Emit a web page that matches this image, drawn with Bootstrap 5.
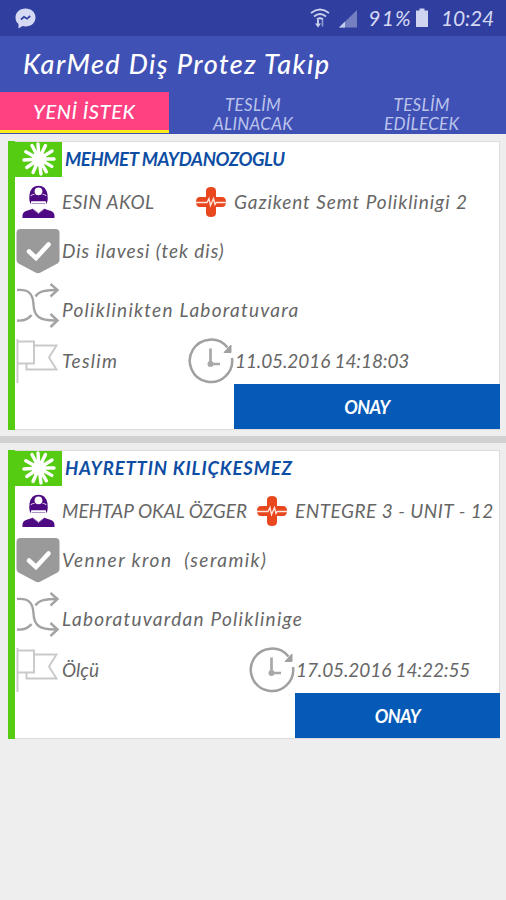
<!DOCTYPE html>
<html lang="tr">
<head>
<meta charset="utf-8">
<meta name="viewport" content="width=device-width, initial-scale=1">
<title>KarMed Diş Protez Takip</title>
<link rel="stylesheet" href="https://cdn.jsdelivr.net/npm/bootstrap@5.3.0/dist/css/bootstrap.min.css">
<style>
body{background:#eee;font-family:"Choco Cooky",Lato,sans-serif;font-style:italic;font-size:19px;line-height:22px;color:#666;overflow:hidden}
svg{display:block;flex:none}
.statusbar{height:36px;background:#303f9f;color:#d5d9f3;font-size:21px;padding-left:15px;padding-right:12px}
.pct{margin-left:10px;letter-spacing:1.3px}
.battery{margin-left:3px}
.time{margin-left:12px;letter-spacing:-.2px}
.appbar{height:56px;background:#3f51b5;color:#fff;font-size:27px;font-weight:500;letter-spacing:1.45px;padding-left:23px}
.tabs{height:42px;background:#3f51b5}
.tabs .nav-link{color:#bcc4ec;font-size:17px;line-height:19px;padding:1px 0 0;border-radius:0;letter-spacing:.3px;display:flex;align-items:center;justify-content:center;text-align:center}
.tabs .nav-link.active{background:#ff4081;color:#fff;font-size:20px;font-weight:500;letter-spacing:.6px;border-bottom:3px solid #ffeb1a;height:41px}
.requests{padding-top:7px}
.request{margin:0 6px 0 8px;background:#fff;border:1px solid #dcdcdc;border-left:0;height:289px}
.request::before{content:"";width:7px;background:#55cb12;margin:-1px 0;flex:none}
.flag-new{width:47px;height:35px;margin-top:-1px;background:#55cb12;padding-left:7px}
.patient{color:#0d4da3;font-weight:700;font-size:18.5px;padding:0 0 2px 3px}
.line-head{height:35px}
.line-staff{height:49px}
.line-work{height:49px}
.line-route{height:62px}
.line-foot{height:92px}
.pic{width:47px;flex:none}
.pic-doctor{padding-left:7px}
.cross{margin-left:7px}
.place{margin-left:7px}
.txt{white-space:pre}
.first-col{width:173px}
.second .first-col{width:234px}
.when{height:47px}
.btn-onay{background:#055ab7;color:#fff;font-style:italic;font-weight:700;font-size:18px;line-height:22px;letter-spacing:-.6px;border:0;border-radius:0;height:45px;margin:0 -1px -1px 46px;padding:0}
.divider{height:7px;background:#d1d1d1;margin:6px 0 7px}
.ls-a{letter-spacing:.44px}.ls-b{letter-spacing:.95px}.ls-c{letter-spacing:1.25px}.ls-d{letter-spacing:1.43px}.ls-e{letter-spacing:-.4px}.ls-f{letter-spacing:.85px}.ls-g{letter-spacing:.5px}.ls-z{letter-spacing:-.1px;margin-left:1px}
</style>
<script src="https://cdn.jsdelivr.net/npm/bootstrap@5.3.0/dist/js/bootstrap.bundle.min.js"></script>
</head>
<body>
<svg width="0" height="0" class="position-absolute" aria-hidden="true">
<defs>
<symbol id="burst" viewBox="0 0 34 34"><g stroke="#fff" stroke-width="3.4" stroke-linecap="round"><path d="M17 17 32 17M17 17 29.800 24.400M17 17 24.400 29.800M17 17 19 32M17 17 11 30.500M17 17 4.800 25.500M17 17 2 18M17 17 3.800 9.800M17 17 10 3.500M17 17 16 2M17 17 23.500 3.500M17 17 30 9"/></g><circle cx="17" cy="17" r="7" fill="#fff"/></symbol>
<symbol id="doctor" viewBox="0 0 34 34"><path d="M.5 33.500v-2.300q.3-3.500 3.600-4.800l7.100-2.400L17 29l5.800-5 7.100 2.400q3.300 1.300 3.600 4.800v2.300z" fill="#4e0a82"/><path d="M7.800 9Q9.500.3 17 .3T26.200 9l.3 4.500q0 3-1.300 5.500H8.800q-1.300-2.500-1.300-5.500z" fill="#4e0a82"/><circle cx="17" cy="6" r="4" fill="#fff"/><path d="M9 10.500q2-1.500 4-1.500M25 10.500q-2-1.500-4-1.500" fill="none" stroke="#d8c9e4" stroke-width="1.200"/><path d="M9.500 16.200h15l.7 3.300q-1 5-8.200 7.500-7.200-2.500-8.200-7.500z" fill="#fff"/><path d="M10 18.500h14M11 24l6 4.500L23 24" fill="none" stroke="#a78bc1" stroke-width="1"/></symbol>
<symbol id="cross" viewBox="0 0 32 32"><path d="M11 5q0-4 5-4t5 4v6h6q4 0 4 5t-4 5h-6v6q0 4-5 4t-5-4v-6H5q-4 0-4-5t4-5h6z" fill="#e9481f"/><path d="M1 16.500h11l2-4 1.500 7 3-7 1.500 6 1.200-2H31" fill="none" stroke="#ffe6df" stroke-width="1.300"/></symbol>
<symbol id="shield" viewBox="0 0 46 46"><path d="M5.500 1h35q4 0 4 4v27q0 2-2 3.500L25.500 44.500q-2.500 1.500-5 0L3.500 35.500q-2-1.500-2-3.500V5q0-4 4-4z" fill="#9a9a9a"/><path d="m14 23.500 7 6.500 12.500-13.500" fill="none" stroke="#fff" stroke-width="4.600" stroke-linecap="round"/></symbol>
<symbol id="shuffle" viewBox="0 0 46 46"><g fill="none" stroke="#a3a3a3" stroke-width="2.400"><path d="M2 7c11-1 16 3 16.500 14.500S24 38 42 37.500M2 37.500c6 .5 11-.5 14.500-5.500M20.500 13.500C24 8 31 7 42 7"/><path d="m35.500 1 7 6-7 6.500M35.500 31l7 6.500-7 6.500"/></g></symbol>
<symbol id="flag" viewBox="0 0 46 46"><path d="M2.500 1v44M3 3.500h16v22H3M19.500 7.500h22l-7.500 12 7.500 12h-30V26" fill="none" stroke="#c9c9c9" stroke-width="1.900"/></symbol>
<symbol id="clock" viewBox="0 0 46 46"><path d="M44 20A21.200 21.200 0 1 1 39.500 9.500" fill="none" stroke="#a0a0a0" stroke-width="2.500"/><path d="M43 7v7.500h-7z" fill="#a0a0a0" stroke="#a0a0a0"/><path d="M22.500 10.500v15.500h9.500" fill="none" stroke="#a8a8a8" stroke-width="2.700"/><circle cx="22.500" cy="26" r="3" fill="#a8a8a8"/></symbol>
</defs>
</svg>
<header>
<div class="statusbar d-flex align-items-center">
<svg width="21" height="21" viewBox="0 0 21 21"><path d="M10.500.5C4.500.5.500 4.500.500 9.500q0 4 3 6.500v4.500l4-2.500q1.500.4 3 .4c6 0 10-4 10-9S16.500.5 10.500.5z" fill="#d5d9f3"/><path d="m6 11.500 3-2.700 3 2 3.200-2.800" fill="none" stroke="#303f9f" stroke-width="1.700"/></svg>
<div class="d-flex align-items-center ms-auto">
<svg width="20" height="20" viewBox="0 0 20 20"><g fill="none" stroke="#cbd0ef" stroke-width="1.800"><path d="M1 5q9-7 18 0M4 8.500q6-5 12 0M7 11.500q3-2.500 6 0"/><path d="M8 12v6" stroke-width="1.900"/></g><path d="m5 15.500 3 4 3-4z" fill="#cbd0ef"/><path d="M12.500 12v6.500" stroke="#8f98d0" stroke-width="1.600"/></svg>
<svg class="ms-2" width="20" height="19" viewBox="0 0 20 19"><path d="M19 1v17.500H1z" fill="#7580c3"/><path d="m7 12.500v6H1z" fill="#c5cbed"/></svg>
<span class="txt pct">91%</span>
<svg class="battery" width="14" height="20" viewBox="0 0 14 20"><path d="M4.500.5h5v2H13V19H1V2.500h3.500z" fill="#cfd4f1"/></svg>
<span class="txt time">10:24</span>
</div>
</div>
<div class="appbar d-flex align-items-center"><span class="txt">KarMed Diş Protez Takip</span></div>
<nav class="tabs nav nav-justified flex-nowrap">
<a class="nav-link active col-4" href="#">YENİ İSTEK</a>
<a class="nav-link col-4" href="#">TESLİM<br>ALINACAK</a>
<a class="nav-link col-4" href="#">TESLİM<br>EDİLECEK</a>
</nav>
</header>
<main class="requests">
<article class="request d-flex">
<div class="flex-grow-1">
<div class="line-head d-flex align-items-center"><div class="flag-new"><svg width="34" height="34"><use href="#burst"/></svg></div><span class="patient txt ls-e">MEHMET MAYDANOZOGLU</span></div>
<div class="line-staff d-flex align-items-center"><div class="first-col d-flex align-items-center"><div class="pic pic-doctor"><svg width="33" height="34"><use href="#doctor"/></svg></div><span class="txt ls-a">ESIN AKOL</span></div><svg width="32" height="32" class="cross"><use href="#cross"/></svg><span class="txt ls-b place">Gazikent Semt Poliklinigi 2</span></div>
<div class="line-work d-flex align-items-center"><div class="pic"><svg width="46" height="46"><use href="#shield"/></svg></div><span class="txt ls-b">Dis ilavesi (tek dis)</span></div>
<div class="line-route d-flex align-items-center"><div class="pic"><svg width="46" height="46"><use href="#shuffle"/></svg></div><span class="txt ls-c pt-2">Poliklinikten Laboratuvara</span></div>
<div class="line-foot d-flex"><div class="first-col d-flex align-items-center when"><div class="pic"><svg width="46" height="46"><use href="#flag"/></svg></div><span class="txt ls-c">Teslim</span></div>
<div class="d-flex flex-column flex-grow-1"><div class="d-flex align-items-center when"><svg width="46" height="46"><use href="#clock"/></svg><span class="txt ls-z">11.05.2016 14:18:03</span></div><button class="btn btn-onay">ONAY</button></div></div>
</div>
</article>
<div class="divider"></div>
<article class="request second d-flex">
<div class="flex-grow-1">
<div class="line-head d-flex align-items-center"><div class="flag-new"><svg width="34" height="34"><use href="#burst"/></svg></div><span class="patient txt ls-f">HAYRETTIN KILIÇKESMEZ</span></div>
<div class="line-staff d-flex align-items-center"><div class="first-col d-flex align-items-center"><div class="pic pic-doctor"><svg width="33" height="34"><use href="#doctor"/></svg></div><span class="txt">MEHTAP OKAL ÖZGER</span></div><svg width="32" height="32" class="cross"><use href="#cross"/></svg><span class="txt ls-g place">ENTEGRE 3 - UNIT - 12</span></div>
<div class="line-work d-flex align-items-center"><div class="pic"><svg width="46" height="46"><use href="#shield"/></svg></div><span class="txt ls-d">Venner kron  (seramik)</span></div>
<div class="line-route d-flex align-items-center"><div class="pic"><svg width="46" height="46"><use href="#shuffle"/></svg></div><span class="txt ls-c pt-2">Laboratuvardan Poliklinige</span></div>
<div class="line-foot d-flex"><div class="first-col d-flex align-items-center when"><div class="pic"><svg width="46" height="46"><use href="#flag"/></svg></div><span class="txt">Ölçü</span></div>
<div class="d-flex flex-column flex-grow-1"><div class="d-flex align-items-center when"><svg width="46" height="46"><use href="#clock"/></svg><span class="txt ls-z">17.05.2016 14:22:55</span></div><button class="btn btn-onay">ONAY</button></div></div>
</div>
</article>
</main>
</body>
</html>
